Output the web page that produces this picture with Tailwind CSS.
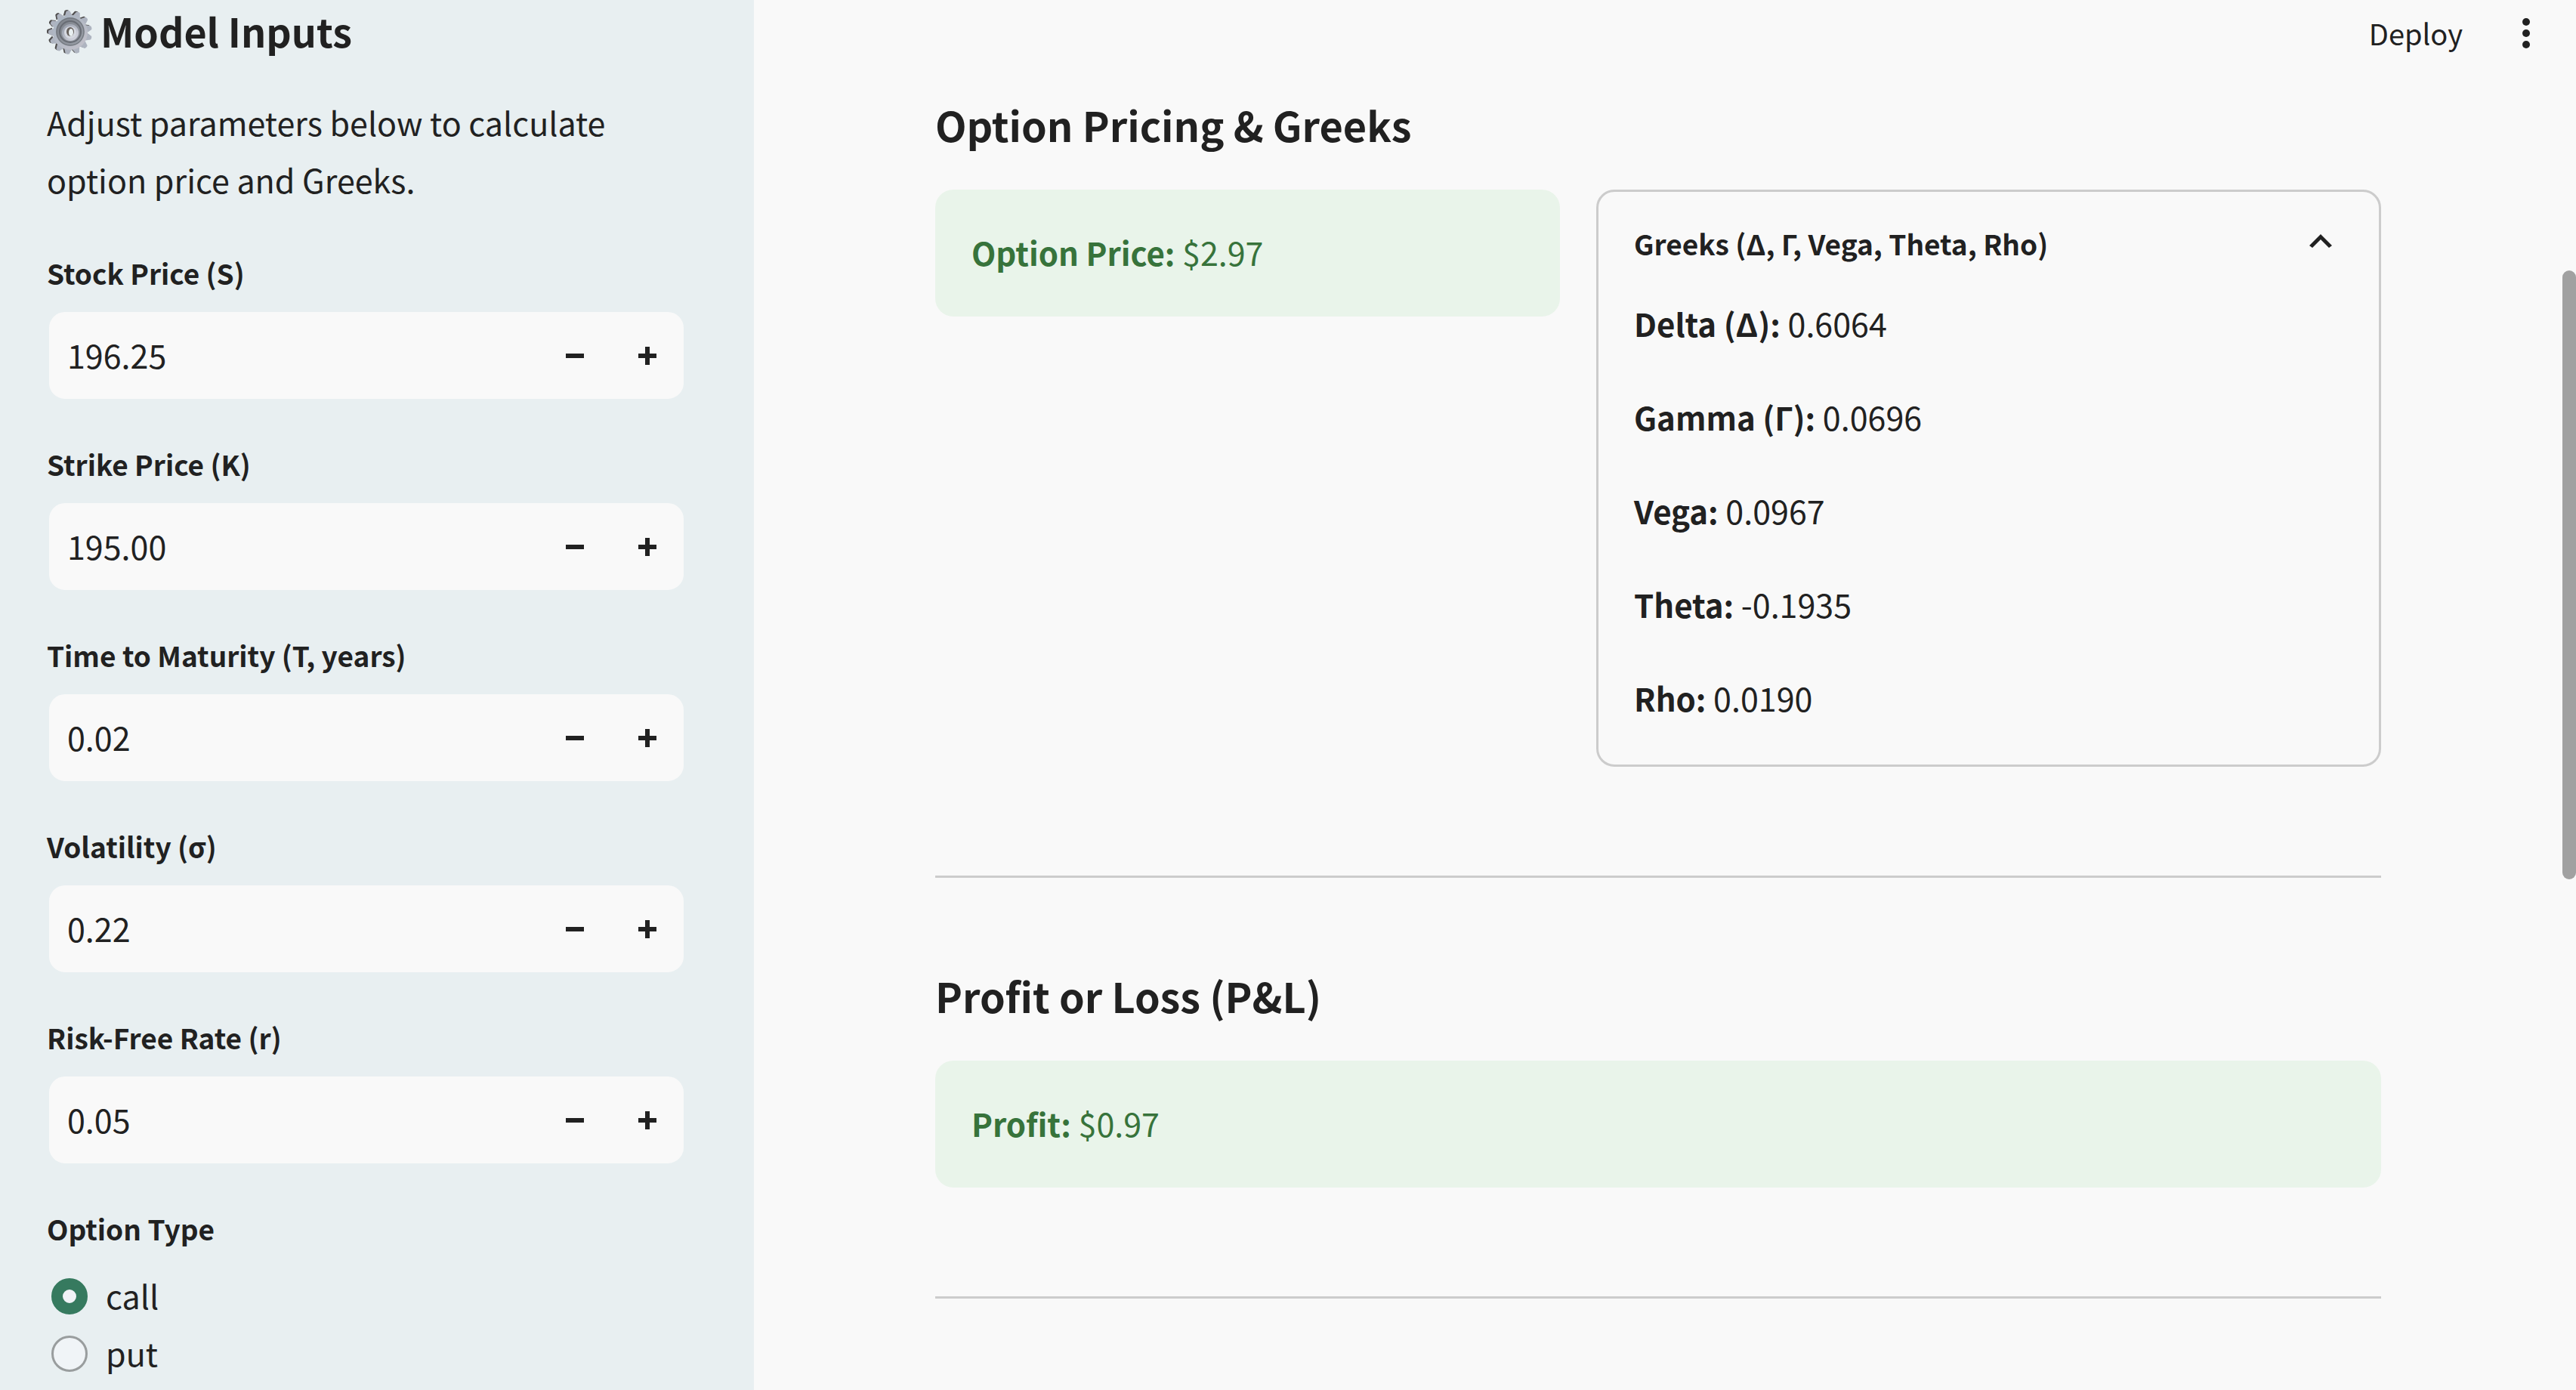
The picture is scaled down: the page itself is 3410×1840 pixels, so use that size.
<!DOCTYPE html>
<html lang="en">
<head>
<meta charset="utf-8">
<title>Option Pricing</title>
<script src="https://cdn.jsdelivr.net/npm/@tailwindcss/browser@4"></script>
</head>
<body class="relative flex min-h-screen overflow-x-hidden bg-[#f9f9f9] font-['Noto_Sans_CJK_SC','Noto_Sans',sans-serif] text-[43px] leading-[76px] text-[#212121]">

<aside class="flex w-[998px] shrink-0 flex-col bg-[#e8eff1] pt-[5px] pr-[90px] pl-[62px]">
  <h2 class="flex items-center gap-[11px] text-[52px] leading-[72px] font-semibold">
    <svg class="h-16 w-[60px] shrink-0" viewBox="0 0 60 64" aria-hidden="true">
      <defs>
        <linearGradient id="rim" gradientUnits="userSpaceOnUse" x1="10" y1="8" x2="50" y2="56"><stop offset="0" stop-color="#a5b2c0"/><stop offset="1" stop-color="#c3c1ca"/></linearGradient>
        <linearGradient id="dish" x1="0" y1="0" x2="1" y2="1"><stop offset="0" stop-color="#7c8189"/><stop offset="1" stop-color="#9a9fa8"/></linearGradient>
        <linearGradient id="hub" x1="0" y1="0" x2="1" y2="1"><stop offset="0" stop-color="#9299a6"/><stop offset="1" stop-color="#dcdce6"/></linearGradient>
        <path id="tooth" d="M-5 -22 L-3 -27 Q-3 -29 0 -29 Q3 -29 3 -27 L5 -22 Z"/>
      </defs>
      <g id="shade" fill="#4f4d4d"></g>
      <g id="front" fill="#aeb4c0"></g>
      <circle cx="31" cy="34" r="23" fill="url(#rim)"/>
      <circle cx="31" cy="33" r="19" fill="url(#dish)"/>
      <circle cx="31" cy="33" r="18" fill="none" stroke="#6d7279" stroke-width="1"/>
      <circle cx="31" cy="33" r="14" fill="none" stroke="#686c74" stroke-width="2"/>
      <circle cx="31" cy="34" r="11" fill="url(#hub)"/>
      <circle cx="31" cy="34" r="8" fill="#d5d8e0"/>
      <ellipse cx="31" cy="33" rx="5" ry="6" fill="#67615d"/>
      <ellipse cx="32" cy="34" rx="3" ry="5" fill="#e8eff1"/>
    </svg>
    Model Inputs
  </h2>
  <p class="mt-[46px]">Adjust parameters below to calculate option price and Greeks.</p>

  <form class="mt-[56px] flex flex-col gap-[53px]">
    <div class="flex flex-col gap-[19px]">
      <label for="stock" class="text-[37px] leading-[60px] font-semibold">Stock Price (S)</label>
      <div class="flex h-[121px] rounded-3xl border-3 border-[#e8eff1] bg-[#f9f9f9]">
        <input id="stock" type="text" inputmode="decimal" value="196.25" class="min-w-0 flex-1 bg-transparent px-6 pb-1 outline-none">
        <button type="button" aria-label="Decrease stock price" class="flex w-24 items-center justify-center"><svg class="size-6" viewBox="0 0 24 24"><path d="M0 9h24v6H0z" fill="#212121"/></svg></button>
        <button type="button" aria-label="Increase stock price" class="flex w-24 items-center justify-center"><svg class="size-6" viewBox="0 0 24 24"><path d="M0 9h9V0h6v9h9v6h-9v9H9v-9H0z" fill="#212121"/></svg></button>
      </div>
    </div>
    <div class="flex flex-col gap-[19px]">
      <label for="strike" class="text-[37px] leading-[60px] font-semibold">Strike Price (K)</label>
      <div class="flex h-[121px] rounded-3xl border-3 border-[#e8eff1] bg-[#f9f9f9]">
        <input id="strike" type="text" inputmode="decimal" value="195.00" class="min-w-0 flex-1 bg-transparent px-6 pb-1 outline-none">
        <button type="button" aria-label="Decrease strike price" class="flex w-24 items-center justify-center"><svg class="size-6" viewBox="0 0 24 24"><path d="M0 9h24v6H0z" fill="#212121"/></svg></button>
        <button type="button" aria-label="Increase strike price" class="flex w-24 items-center justify-center"><svg class="size-6" viewBox="0 0 24 24"><path d="M0 9h9V0h6v9h9v6h-9v9H9v-9H0z" fill="#212121"/></svg></button>
      </div>
    </div>
    <div class="flex flex-col gap-[19px]">
      <label for="maturity" class="text-[37px] leading-[60px] font-semibold">Time to Maturity (T, years)</label>
      <div class="flex h-[121px] rounded-3xl border-3 border-[#e8eff1] bg-[#f9f9f9]">
        <input id="maturity" type="text" inputmode="decimal" value="0.02" class="min-w-0 flex-1 bg-transparent px-6 pb-1 outline-none">
        <button type="button" aria-label="Decrease maturity" class="flex w-24 items-center justify-center"><svg class="size-6" viewBox="0 0 24 24"><path d="M0 9h24v6H0z" fill="#212121"/></svg></button>
        <button type="button" aria-label="Increase maturity" class="flex w-24 items-center justify-center"><svg class="size-6" viewBox="0 0 24 24"><path d="M0 9h9V0h6v9h9v6h-9v9H9v-9H0z" fill="#212121"/></svg></button>
      </div>
    </div>
    <div class="flex flex-col gap-[19px]">
      <label for="volatility" class="text-[37px] leading-[60px] font-semibold">Volatility (σ)</label>
      <div class="flex h-[121px] rounded-3xl border-3 border-[#e8eff1] bg-[#f9f9f9]">
        <input id="volatility" type="text" inputmode="decimal" value="0.22" class="min-w-0 flex-1 bg-transparent px-6 pb-1 outline-none">
        <button type="button" aria-label="Decrease volatility" class="flex w-24 items-center justify-center"><svg class="size-6" viewBox="0 0 24 24"><path d="M0 9h24v6H0z" fill="#212121"/></svg></button>
        <button type="button" aria-label="Increase volatility" class="flex w-24 items-center justify-center"><svg class="size-6" viewBox="0 0 24 24"><path d="M0 9h9V0h6v9h9v6h-9v9H9v-9H0z" fill="#212121"/></svg></button>
      </div>
    </div>
    <div class="flex flex-col gap-[19px]">
      <label for="rate" class="text-[37px] leading-[60px] font-semibold">Risk-Free Rate (r)</label>
      <div class="flex h-[121px] rounded-3xl border-3 border-[#e8eff1] bg-[#f9f9f9]">
        <input id="rate" type="text" inputmode="decimal" value="0.05" class="min-w-0 flex-1 bg-transparent px-6 pb-1 outline-none">
        <button type="button" aria-label="Decrease rate" class="flex w-24 items-center justify-center"><svg class="size-6" viewBox="0 0 24 24"><path d="M0 9h24v6H0z" fill="#212121"/></svg></button>
        <button type="button" aria-label="Increase rate" class="flex w-24 items-center justify-center"><svg class="size-6" viewBox="0 0 24 24"><path d="M0 9h9V0h6v9h9v6h-9v9H9v-9H0z" fill="#212121"/></svg></button>
      </div>
    </div>
    <fieldset>
      <legend class="mb-5 text-[37px] leading-[60px] font-semibold">Option Type</legend>
      <label class="flex items-center gap-6 pl-[6px]"><input type="radio" name="type" checked class="mt-1 size-12 appearance-none rounded-full border-3 border-[#999d9e] bg-[#f0f4f7] checked:border-[15px] checked:border-[#367a5f] checked:bg-[#f0f2f6]">call</label>
      <label class="flex items-center gap-6 pl-[6px]"><input type="radio" name="type" class="mt-1 size-12 appearance-none rounded-full border-3 border-[#999d9e] bg-[#f0f4f7] checked:border-[15px] checked:border-[#367a5f] checked:bg-[#f0f2f6]">put</label>
    </fieldset>
  </form>
</aside>

<div class="flex min-w-0 flex-1 flex-col">
  <header class="flex h-[88px] items-center justify-end gap-[79px] pr-[61px]">
    <button type="button" class="text-[38px] leading-[60px]">Deploy</button>
    <button type="button" aria-label="Menu"><svg class="h-10 w-[10px]" viewBox="0 0 10 40" fill="#212121"><circle cx="5" cy="5" r="5"/><circle cx="5" cy="20" r="5"/><circle cx="5" cy="35" r="5"/></svg></button>
  </header>

  <main class="pt-[41px] pr-[258px] pl-60">
    <h3 class="text-[54px] leading-[72px] font-semibold">Option Pricing &amp; Greeks</h3>
    <div class="mt-[50px] grid grid-cols-[827fr_1039fr] items-start gap-12">
      <div class="rounded-3xl bg-[#e9f4ea] px-12 pt-11 pb-12 text-[#37733b]"><strong class="text-[42px] leading-none font-semibold">Option Price:</strong> $2.97</div>
      <details open class="rounded-3xl border-3 border-[#cccccc] px-[47px] pt-[38px] pb-[51px]">
        <summary class="flex list-none items-center justify-between text-[37px] leading-[60px] font-semibold">
          Greeks (Δ, Γ, Vega, Theta, Rho)
          <svg class="mr-[15px] h-6 w-[30px]" viewBox="0 0 30 24" fill="#212121"><path d="M15 0 30 15l-4 3L15 7 4 18l-4-3z"/></svg>
        </summary>
        <div class="mt-[37px] flex flex-col gap-12">
          <p><strong class="text-[42px] leading-none font-semibold">Delta (Δ):</strong> 0.6064</p>
          <p><strong class="text-[42px] leading-none font-semibold">Gamma (Γ):</strong> 0.0696</p>
          <p><strong class="text-[42px] leading-none font-semibold">Vega:</strong> 0.0967</p>
          <p><strong class="text-[42px] leading-none font-semibold">Theta:</strong> -0.1935</p>
          <p><strong class="text-[42px] leading-none font-semibold">Rho:</strong> 0.0190</p>
        </div>
      </details>
    </div>
    <hr class="mt-36 border-t-3 border-[#cccccc]">
    <h3 class="mt-[120px] text-[54px] leading-[72px] font-semibold">Profit or Loss (P&amp;L)</h3>
    <div class="mt-[50px] rounded-3xl bg-[#e9f4ea] px-12 pt-11 pb-12 text-[#37733b]"><strong class="text-[42px] leading-none font-semibold">Profit:</strong> $0.97</div>
    <hr class="mt-36 border-t-3 border-[#cccccc]">
  </main>
</div>

<!-- scroll thumb -->
<div class="absolute top-[358px] right-0 h-[806px] w-[18px] rounded-full bg-[#a1a1a1]"></div>

<script>
  // thirteen gear teeth, dark side faces offset behind the light front faces
  const ring = (id, cx, cy) => {
    let out = '';
    for (let i = 0; i < 13; i++) out += `<use href="#tooth" transform="translate(${cx} ${cy}) rotate(${i * 360 / 13 - 6})"/>`;
    document.getElementById(id).innerHTML = out;
  };
  ring('shade', 29, 33);
  ring('front', 31, 34);
</script>
</body>
</html>
